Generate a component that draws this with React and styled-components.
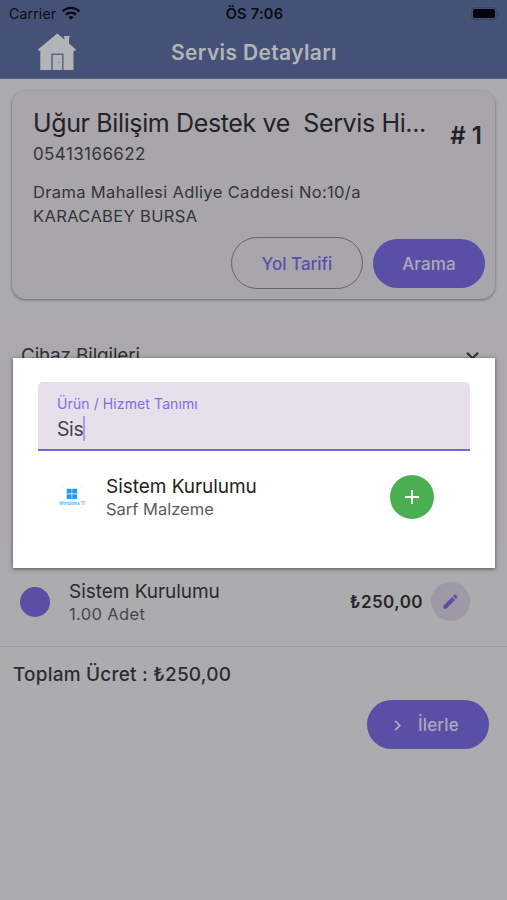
import React, { useState } from 'react';
import styled, { createGlobalStyle } from 'styled-components';
import { MdEdit, MdAdd, MdChevronRight, MdKeyboardArrowDown, MdWifi } from 'react-icons/md';

const GlobalStyle = createGlobalStyle`
    * {
        box-sizing: border-box;
    }

    body {
        margin: 0;
        background: #acacae;
        font-family: Inter, 'Liberation Sans', sans-serif;
        color: #28272c;
    }
`;

const Screen = styled.div`
    position: relative;
    display: flex;
    flex-direction: column;
    width: 507px;
    height: 900px;
    overflow: hidden;
    background: #acacae;
`;

const TopBar = styled.header`
    height: 79px;
    flex-shrink: 0;
    background: #455277;
    border-bottom: 1px solid #5c6580;
`;

const StatusBar = styled.div`
    display: grid;
    grid-template-columns: 1fr auto 1fr;
    align-items: center;
    height: 27px;
    padding: 0 7px 0 9px;
    color: #090b12;
    font-size: 14px;
`;

const Carrier = styled.div`
    display: flex;
    align-items: center;
    gap: 5px;
    letter-spacing: 0.2px;

    svg {
        margin-bottom: 2px;
    }
`;

const Clock = styled.div`
    font-weight: 600;
    font-size: 14.5px;
    letter-spacing: 0.3px;
`;

const BatterySlot = styled.div`
    display: flex;
    justify-content: flex-end;
`;

const NavBar = styled.div`
    display: grid;
    grid-template-columns: 114px 1fr 114px;
    align-items: center;
    height: 50px;
`;

const HomeSlot = styled.div`
    display: flex;
    justify-content: center;
`;

const NavTitle = styled.h1`
    margin: 0;
    text-align: center;
    font-size: 21px;
    font-weight: 600;
    letter-spacing: 0.35px;
    color: #b3b4b8;
    padding-left: 1px;
`;

const Card = styled.section`
    display: flex;
    flex-direction: column;
    height: 208px;
    flex-shrink: 0;
    margin: 12px 12px 0;
    padding: 13px 10px 10px 21px;
    border-radius: 14px;
    background: #a8a6ab;
    box-shadow: 0 1px 3px rgba(30, 30, 40, 0.5);
`;

const CardHeader = styled.div`
    display: flex;
    justify-content: space-between;
    align-items: flex-start;
    padding-right: 3px;
`;

const CustomerName = styled.div`
    font-size: 25px;
    line-height: 38px;
    letter-spacing: -0.37px;
    white-space: pre;
    color: #232227;
`;

const CardText = styled.div`
    font-size: ${({ $size }) => $size || '16.5px'};
    line-height: 24px;
    letter-spacing: ${({ $spacing }) => $spacing || '0.35px'};
    color: #353439;
`;

const ServiceNo = styled.div`
    padding-top: 18px;
    font-size: 24px;
    line-height: 28px;
    font-weight: 600;
    white-space: nowrap;
    color: #222126;
`;

const Address = styled.div`
    margin-top: 14px;
`;

const CardActions = styled.div`
    display: flex;
    align-items: center;
    justify-content: flex-end;
    gap: 10px;
    margin-top: auto;
`;

const Button = styled.button`
    display: flex;
    align-items: center;
    justify-content: ${({ $withIcon }) => ($withIcon ? 'flex-start' : 'center')};
    gap: 10px;
    width: ${({ $width }) => $width};
    height: ${({ $outlined }) => ($outlined ? '52px' : '49px')};
    padding: 1px 0 0 ${({ $withIcon }) => ($withIcon ? '20px' : '0')};
    border: ${({ $outlined }) => ($outlined ? '1.5px solid #67656c' : 'none')};
    border-radius: 26px;
    background: ${({ $outlined }) => ($outlined ? 'transparent' : '#5a4fa7')};
    color: ${({ $outlined }) => ($outlined ? '#5a4fa7' : '#acaabb')};
    font: 500 17px Inter, 'Liberation Sans', sans-serif;
    letter-spacing: ${({ $spacing }) => $spacing || '0.15px'};
`;

const Accordion = styled.section`
    display: flex;
    justify-content: space-between;
    align-items: flex-start;
    height: 226px;
    flex-shrink: 0;
    margin-top: 20px;
    padding: 24px 22px 0 21px;
    background: #aba9ad;
    font-size: 19px;
    line-height: 26px;
    letter-spacing: -0.2px;
    color: #302f34;
`;

const ProductRow = styled.div`
    display: flex;
    align-items: center;
    height: 102px;
    flex-shrink: 0;
    padding: 12px 37px 0 20px;
    border-bottom: 1px solid #9c9c9e;
`;

const Avatar = styled.div`
    width: 30px;
    height: 30px;
    border-radius: 50%;
    background: #5a4fa7;
`;

const ItemText = styled.div`
    flex: 1;
    margin-left: ${({ $indent }) => $indent};
    padding-top: 2px;
`;

const ItemName = styled.div`
    font-size: 19px;
    line-height: 22px;
    letter-spacing: -0.04px;
    color: ${({ $color }) => $color};
`;

const ItemNote = styled.div`
    font-size: 16.5px;
    line-height: 22px;
    letter-spacing: ${({ $spacing }) => $spacing};
    color: ${({ $color }) => $color};
`;

const Price = styled.div`
    font-size: 17px;
    font-weight: 600;
    letter-spacing: 0.45px;
    color: #27272a;
`;

const RoundButton = styled.button`
    display: flex;
    align-items: center;
    justify-content: center;
    width: ${({ $size }) => $size};
    height: ${({ $size }) => $size};
    margin-left: 8px;
    padding: 0;
    border: none;
    border-radius: 50%;
    background: ${({ $bg }) => $bg};
    color: ${({ $color }) => $color};
`;

const Total = styled.div`
    padding: 14px 13px 0;
    font-size: 19px;
    line-height: 27px;
    font-weight: 500;
    letter-spacing: 0.2px;
    color: #2c2c2f;
`;

const Footer = styled.footer`
    display: flex;
    justify-content: flex-end;
    padding: 12px 18px 0;
`;

const Modal = styled.div`
    position: absolute;
    top: 358px;
    left: 13px;
    width: 482px;
    height: 210px;
    padding: 24px 25px;
    background: #fff;
    box-shadow: 0 1px 4px rgba(20, 20, 30, 0.6);
`;

const Field = styled.label`
    display: flex;
    flex-direction: column;
    height: 69px;
    padding: 13px 19px 0;
    border-bottom: 2px solid #7864dc;
    border-radius: 5px 5px 0 0;
    background: #e5e0ea;
`;

const FieldLabel = styled.span`
    font-size: 14px;
    line-height: 18px;
    letter-spacing: 0.1px;
    color: #806af0;
`;

const FieldValue = styled.span`
    display: flex;
    align-items: center;
    height: 31px;
    font-size: 19.5px;
    letter-spacing: -0.4px;
    color: #45424a;
`;

const Caret = styled.span`
    width: 2px;
    height: 25px;
    background: #a99df0;
`;

const ResultRow = styled.div`
    display: flex;
    align-items: center;
    height: 92px;
    padding: 0 36px 0 19px;
`;

function HomeIcon() {
    return (
        <svg width="39" height="38" viewBox="0 0 39 38">
            <path
                fill="#b3b4b8"
                d="M19.2 0.5 26.5 6.6V4.5h-.8V3h6v1.5H31v6l7 5.9-1.3 1.9-1.2-.7V37H2.3V17.6l-1.2.7L0 16.4Z"
            />
            <path fill="none" stroke="#58648a" strokeWidth="1.5" d="M14 37V21.3h10.8V37" />
            <circle cx="21" cy="29.5" r="0.7" fill="#7d859c" />
        </svg>
    );
}

function BatteryIcon() {
    return (
        <svg width="29" height="14" viewBox="0 0 29 14">
            <rect x="0.5" y="0.5" width="25" height="12" rx="3.5" fill="none" stroke="#384462" />
            <rect x="2" y="2" width="22" height="9" rx="2" fill="#020308" />
            <path d="M27 5v4c1.3-.6 1.3-3.4 0-4Z" fill="#30394f" />
        </svg>
    );
}

function WindowsLogo() {
    return (
        <svg width="30" height="30" viewBox="0 0 30 30">
            <circle cx="15" cy="15" r="14.5" fill="#fff" stroke="#f6f7f8" />
            <path fill="#1e9df0" d="M9.7 6.7h4.9v4.9H9.7zM15.2 6.7h4.9v4.9h-4.9zM9.7 12.2h4.9v4.9H9.7zM15.2 12.2h4.9v4.9h-4.9z" />
            <text x="15" y="23" textAnchor="middle" fontFamily="Inter, sans-serif" fontSize="4.6" fontWeight="500" fill="#37aaf2">
                Windows 11
            </text>
        </svg>
    );
}

function App() {
    const [query] = useState('Sis');

    return (
        <Screen>
            <GlobalStyle />
            <TopBar>
                <StatusBar>
                    <Carrier>
                        Carrier <MdWifi size={20} />
                    </Carrier>
                    <Clock>ÖS 7:06</Clock>
                    <BatterySlot>
                        <BatteryIcon />
                    </BatterySlot>
                </StatusBar>
                <NavBar>
                    <HomeSlot>
                        <HomeIcon />
                    </HomeSlot>
                    <NavTitle>Servis Detayları</NavTitle>
                </NavBar>
            </TopBar>

            <Card>
                <CardHeader>
                    <div>
                        <CustomerName>{'Uğur Bilişim Destek ve  Servis Hi...'}</CustomerName>
                        <CardText $size="17px" $spacing="0.4px">05413166622</CardText>
                    </div>
                    <ServiceNo># 1</ServiceNo>
                </CardHeader>
                <Address>
                    <CardText>Drama Mahallesi Adliye Caddesi No:10/a</CardText>
                    <CardText>KARACABEY BURSA</CardText>
                </Address>
                <CardActions>
                    <Button $outlined $width="132px" $spacing="0">Yol Tarifi</Button>
                    <Button $width="112px">Arama</Button>
                </CardActions>
            </Card>

            <Accordion>
                Cihaz Bilgileri
                <MdKeyboardArrowDown size={25} />
            </Accordion>

            <ProductRow>
                <Avatar />
                <ItemText $indent="19px">
                    <ItemName $color="#2b2b2e">Sistem Kurulumu</ItemName>
                    <ItemNote $color="#47474a" $spacing="0.35px">1.00 Adet</ItemNote>
                </ItemText>
                <Price>₺250,00</Price>
                <RoundButton $size="39px" $bg="#9f98a5" $color="#5a4fa7">
                    <MdEdit size={19} />
                </RoundButton>
            </ProductRow>

            <Total>Toplam Ücret : ₺250,00</Total>
            <Footer>
                <Button $withIcon $width="122px">
                    <MdChevronRight size={21} />
                    İlerle
                </Button>
            </Footer>

            <Modal>
                <Field>
                    <FieldLabel>Ürün / Hizmet Tanımı</FieldLabel>
                    <FieldValue>
                        {query}
                        <Caret />
                    </FieldValue>
                </Field>
                <ResultRow>
                    <WindowsLogo />
                    <ItemText $indent="19px">
                        <ItemName $color="#1f1f21">Sistem Kurulumu</ItemName>
                        <ItemNote $color="#5b5b5e" $spacing="0">Sarf Malzeme</ItemNote>
                    </ItemText>
                    <RoundButton $size="44px" $bg="#4bae50" $color="#fff">
                        <MdAdd size={24} />
                    </RoundButton>
                </ResultRow>
            </Modal>
        </Screen>
    );
}

export default App;
